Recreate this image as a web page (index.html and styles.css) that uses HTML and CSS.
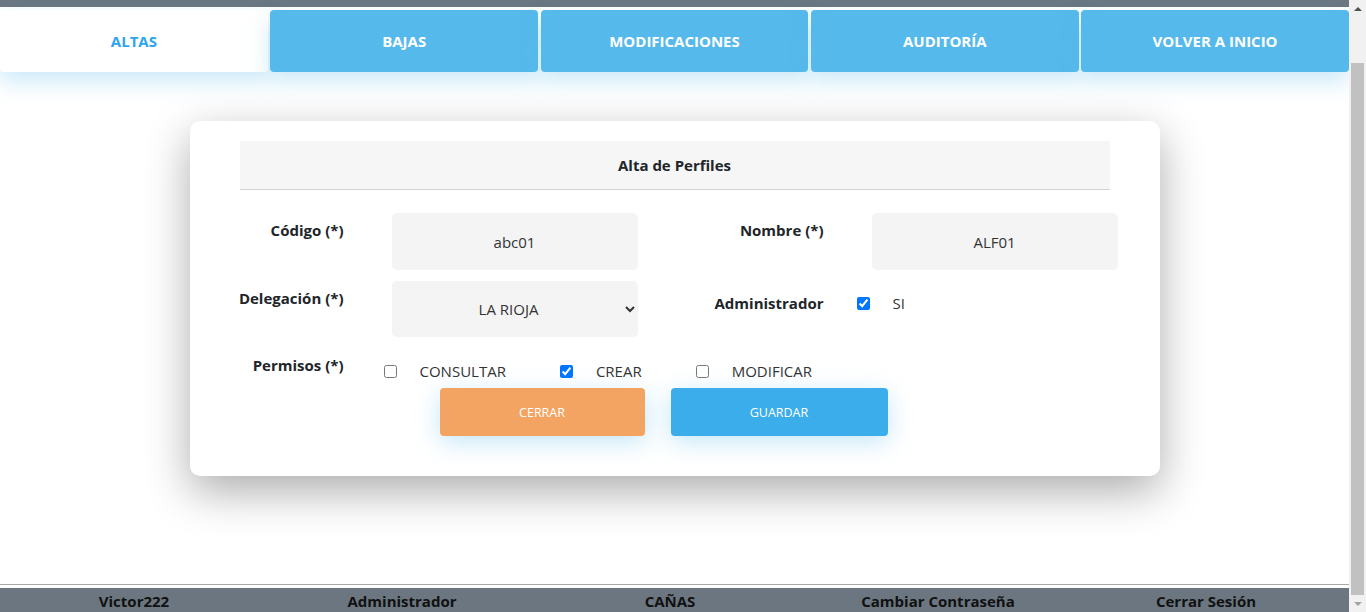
FILE: index.html
```html
<!DOCTYPE html>
<html lang="es">
<head>
<meta charset="utf-8">
<title>Alta de Perfiles</title>
<link rel="stylesheet" href="styles.css">
</head>
<body>
<header class="topbar"></header>
<nav class="tabs">
  <a class="tab active">ALTAS</a>
  <a class="tab">BAJAS</a>
  <a class="tab">MODIFICACIONES</a>
  <a class="tab">AUDITORÍA</a>
  <a class="tab">VOLVER A INICIO</a>
</nav>
<main class="main">
  <section class="card">
    <div class="card-title">Alta de Perfiles</div>
    <form class="form">
      <div class="row">
        <div class="half">
          <label class="label">Código (*)</label>
          <input class="field" type="text" value="abc01">
        </div>
        <div class="half">
          <label class="label">Nombre (*)</label>
          <input class="field" type="text" value="ALF01">
        </div>
      </div>
      <div class="row">
        <div class="half">
          <label class="label">Delegación (*)</label>
          <select class="field select"><option>LA RIOJA</option></select>
        </div>
        <div class="half">
          <label class="label label-admin">Administrador</label>
          <div class="admin-check">
            <input type="checkbox" checked>
            <span class="opt-text">SI</span>
          </div>
        </div>
      </div>
      <div class="row row-perms">
        <div class="half half-wide">
          <label class="label">Permisos (*)</label>
          <div class="perms">
            <span class="perm"><input type="checkbox"><span class="opt-text">CONSULTAR</span></span>
            <span class="perm"><input type="checkbox" checked><span class="opt-text">CREAR</span></span>
            <span class="perm"><input type="checkbox"><span class="opt-text">MODIFICAR</span></span>
          </div>
        </div>
      </div>
      <div class="actions">
        <button type="button" class="btn btn-close">CERRAR</button>
        <button type="button" class="btn btn-save">GUARDAR</button>
      </div>
    </form>
  </section>
</main>
<hr class="rule">
<footer class="footer">
  <span>Victor222</span>
  <span>Administrador</span>
  <span>CAÑAS</span>
  <span>Cambiar Contraseña</span>
  <span>Cerrar Sesión</span>
</footer>
<div class="scrollbar" aria-hidden="true">
  <span class="sb-btn"><span class="arrow-up"></span></span>
  <span class="sb-track"><span class="sb-thumb"></span></span>
  <span class="sb-btn"><span class="arrow-down"></span></span>
</div>
<script src="script.js"></script>
</body>
</html>
```
FILE: styles.css
```css
html { scrollbar-width: none; }
body {
  margin: 0 17px 0 0;
  font-family: "Segoe UI", "Open Sans", "Noto Sans", sans-serif;
  color: #212529;
  background: #fff;
}
.scrollbar {
  position: fixed;
  top: 0;
  right: 0;
  width: 17px;
  height: 100vh;
  background: #f1f1f1;
  display: flex;
  flex-direction: column;
}
.sb-btn {
  height: 17px;
  flex: none;
  display: flex;
  align-items: center;
  justify-content: center;
}
.arrow-up {
  width: 0;
  height: 0;
  border-left: 4px solid transparent;
  border-right: 4px solid transparent;
  border-bottom: 4px solid #505050;
}
.arrow-down {
  width: 0;
  height: 0;
  border-left: 4px solid transparent;
  border-right: 4px solid transparent;
  border-top: 4px solid #a3a3a3;
}
.sb-track {
  flex: 1;
  display: flex;
  flex-direction: column;
  padding: 46px 2px 0;
}
.sb-thumb {
  flex: 1;
  background: #c1c1c1;
}
.topbar {
  height: 60px;
  background: #6b7680;
}
.tabs {
  display: grid;
  grid-template-columns: repeat(5, 1fr);
  column-gap: 2.5px;
  margin-top: 3px;
}
.tab {
  height: 62px;
  display: flex;
  align-items: center;
  justify-content: center;
  background: #56b9eb;
  color: #fff;
  font-weight: 700;
  font-size: 15px;
  border-radius: 4px;
  box-shadow: 0 10px 22px rgba(86, 185, 235, 0.3);
}
.tab.active {
  background: #fff;
  color: #2ea4ef;
}
.main {
  padding-top: 49px;
  padding-bottom: 108px;
}
.card {
  width: 970px;
  box-sizing: border-box;
  margin: 0 auto;
  background: #fff;
  border-radius: 10px;
  padding: 20px 50px 40px;
  box-shadow: 0 15px 45px rgba(0, 0, 0, 0.33);
}
.card-title {
  height: 48px;
  background: #f6f6f6;
  border-bottom: 1px solid #d2d2d2;
  display: flex;
  align-items: center;
  justify-content: center;
  font-weight: 700;
  font-size: 15px;
}
.form {
  width: 960px;
  margin: 23px 0 0 -42px;
}
.row {
  display: flex;
  margin-bottom: 11px;
}
.half {
  width: 480px;
  display: flex;
  align-items: flex-start;
}
.half-wide { width: 960px; }
.label {
  width: 146px;
  flex: none;
  text-align: right;
  font-weight: 700;
  font-size: 15px;
  padding-top: 7px;
  margin-right: 48px;
}
.field {
  width: 246px;
  height: 57px;
  box-sizing: border-box;
  border: none;
  border-radius: 5px;
  background: #f4f4f4;
  text-align: center;
  text-align-last: center;
  font-family: inherit;
  font-size: 15px;
  color: #333;
  padding: 0 8px;
}
.select { height: 56px; }
.label-admin { padding-top: 12px; }
.admin-check {
  display: flex;
  align-items: center;
  padding-top: 12px;
  margin-left: -15px;
}
.admin-check input, .perm input {
  width: 13px;
  height: 13px;
  margin: 0;
}
.opt-text {
  font-size: 15px;
  color: #333;
  margin-left: 23px;
}
.row-perms { margin-bottom: 0; height: 40px; }
.perms {
  display: flex;
  align-items: center;
  margin-left: -8px;
  padding-top: 13px;
}
.perm {
  display: flex;
  align-items: center;
  margin-right: 54px;
}
.perm .opt-text { margin-left: 23px; }
.actions {
  display: flex;
  margin-left: 242px;
  gap: 26px;
}
.btn {
  height: 48px;
  border: none;
  border-radius: 4px;
  color: #fff;
  font-family: inherit;
  font-size: 12.5px;
  box-shadow: 0 6px 24px rgba(58, 174, 232, 0.3);
}
.btn-close { width: 205px; background: #f3a462; }
.btn-save { width: 217px; background: #3badea; }
.rule {
  margin: 0;
  border: none;
  border-top: 1px solid #a8a8a8;
  height: 3px;
}
.footer {
  height: 24px;
  background: #6b7680;
  display: grid;
  grid-template-columns: repeat(5, 1fr);
  padding-right: 9px;
  align-items: center;
  font-weight: 700;
  font-size: 15px;
  color: #111;
  text-align: center;
}
.footer span { padding-top: 1px; }
```
FILE: script.js
```js
window.scrollTo(0, document.documentElement.scrollHeight);
```
